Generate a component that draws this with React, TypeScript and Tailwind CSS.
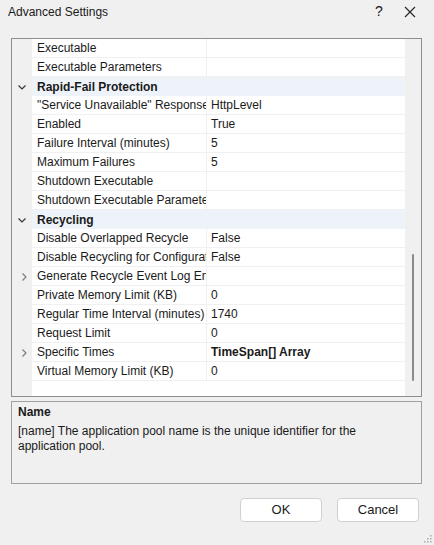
import React from "react";

type Row =
  | { kind: "cat"; label: string }
  | { kind: "prop"; label: string; value?: string; bold?: boolean; expand?: boolean };

const ROWS: Row[] = [
  { kind: "prop", label: "Executable" },
  { kind: "prop", label: "Executable Parameters" },
  { kind: "cat", label: "Rapid-Fail Protection" },
  { kind: "prop", label: "\"Service Unavailable\" Response Type", value: "HttpLevel" },
  { kind: "prop", label: "Enabled", value: "True" },
  { kind: "prop", label: "Failure Interval (minutes)", value: "5" },
  { kind: "prop", label: "Maximum Failures", value: "5" },
  { kind: "prop", label: "Shutdown Executable" },
  { kind: "prop", label: "Shutdown Executable Parameters" },
  { kind: "cat", label: "Recycling" },
  { kind: "prop", label: "Disable Overlapped Recycle", value: "False" },
  { kind: "prop", label: "Disable Recycling for Configuration Changes", value: "False" },
  { kind: "prop", label: "Generate Recycle Event Log Entry", expand: true },
  { kind: "prop", label: "Private Memory Limit (KB)", value: "0" },
  { kind: "prop", label: "Regular Time Interval (minutes)", value: "1740" },
  { kind: "prop", label: "Request Limit", value: "0" },
  { kind: "prop", label: "Specific Times", value: "TimeSpan[] Array", bold: true, expand: true },
  { kind: "prop", label: "Virtual Memory Limit (KB)", value: "0" },
];

function ChevronDown() {
  return (
    <svg width="10" height="10" viewBox="0 0 10 10" fill="none">
      <path d="M1.5 3.5 L5 7 L8.5 3.5" stroke="#333" strokeWidth="1.2" />
    </svg>
  );
}

function ChevronRight() {
  return (
    <svg width="10" height="10" viewBox="0 0 10 10" fill="none">
      <path d="M3.5 1.5 L7 5 L3.5 8.5" stroke="#777" strokeWidth="1.1" />
    </svg>
  );
}

export default function App() {
  return (
    <div
      className="w-[434px] h-[545px] bg-[#f0f0f0] text-[12px] text-[#1a1a1a] flex flex-col overflow-hidden"
      style={{ fontFamily: '"Liberation Sans", Arial, sans-serif' }}
    >
      {/* Title bar */}
      <div className="h-[23px] flex items-center pl-[8px] shrink-0">
        <span className="flex-1">Advanced Settings</span>
        <span className="w-[46px] text-center text-[14px] mr-[2px]">?</span>
        <svg width="12" height="12" viewBox="0 0 12 12" className="mr-[18px]">
          <path d="M1 1 L11 11 M11 1 L1 11" stroke="#222" strokeWidth="1.1" />
        </svg>
      </div>

      {/* Property grid */}
      <div className="mt-[15px] mx-[11px] w-[411px] h-[359px] border border-[#8e8e8e] flex shrink-0 bg-white">
        <div className="flex-1 flex flex-col">
          {ROWS.map((r, i) =>
            r.kind === "cat" ? (
              <div key={i} className="h-[19px] flex items-center">
                <div className="w-[20px] h-full bg-[#f0f0f0] flex items-center justify-center">
                  <ChevronDown />
                </div>
                <div className="flex-1 h-full bg-[#eef2f9] flex items-center pl-[5px] font-bold">
                  {r.label}
                </div>
              </div>
            ) : (
              <div key={i} className="h-[19px] flex">
                <div className="w-[20px] h-full bg-[#f0f0f0] flex items-center justify-center pl-[3px]">
                  {r.expand && <ChevronRight />}
                </div>
                <div className="w-[175px] h-full border-b border-r border-[#f0f0f0] overflow-hidden whitespace-nowrap pl-[5px] flex items-center">
                  {r.label}
                </div>
                <div
                  className={
                    "flex-1 h-full border-b border-[#f0f0f0] pl-[4px] flex items-center whitespace-nowrap " +
                    (r.bold ? "font-bold" : "")
                  }
                >
                  {r.value}
                </div>
              </div>
            )
          )}
          <div className="flex-1 flex">
            <div className="w-[20px] bg-[#f0f0f0]" />
            <div className="flex-1" />
          </div>
        </div>
        {/* Scrollbar */}
        <div className="w-[16px] bg-[#f0f0f0] flex flex-col">
          <div className="h-[215px]" />
          <div className="ml-[7px] w-[2px] h-[127px] rounded-full bg-[#8a8a8a]" />
        </div>
      </div>

      {/* Description */}
      <div className="mt-[4px] mx-[11px] w-[411px] h-[83px] border border-[#a0a0a0] px-[6px] pt-[3px] leading-[15px] shrink-0">
        <div className="font-bold mb-[4px]">Name</div>
        <div>
          [name] The application pool name is the unique identifier for the
          <br />
          application pool.
        </div>
      </div>

      {/* Buttons */}
      <div className="flex justify-end gap-[15px] mt-[14px] mr-[15px]">
        <button className="w-[82px] h-[24px] bg-white border border-[#d0d0d0] rounded-[4px] text-[13px]">
          OK
        </button>
        <button className="w-[82px] h-[24px] bg-white border border-[#d0d0d0] rounded-[4px] text-[13px]">
          Cancel
        </button>
      </div>

      {/* Resize grip */}
      <div className="flex-1 flex items-end justify-end pr-[2px] pb-[2px]">
        <svg width="8" height="8" viewBox="0 0 8 8">
          <rect x="6" y="0" width="1.5" height="1.5" fill="#aaa" />
          <rect x="3" y="3" width="1.5" height="1.5" fill="#aaa" />
          <rect x="6" y="3" width="1.5" height="1.5" fill="#aaa" />
          <rect x="0" y="6" width="1.5" height="1.5" fill="#aaa" />
          <rect x="3" y="6" width="1.5" height="1.5" fill="#aaa" />
          <rect x="6" y="6" width="1.5" height="1.5" fill="#aaa" />
        </svg>
      </div>
    </div>
  );
}
